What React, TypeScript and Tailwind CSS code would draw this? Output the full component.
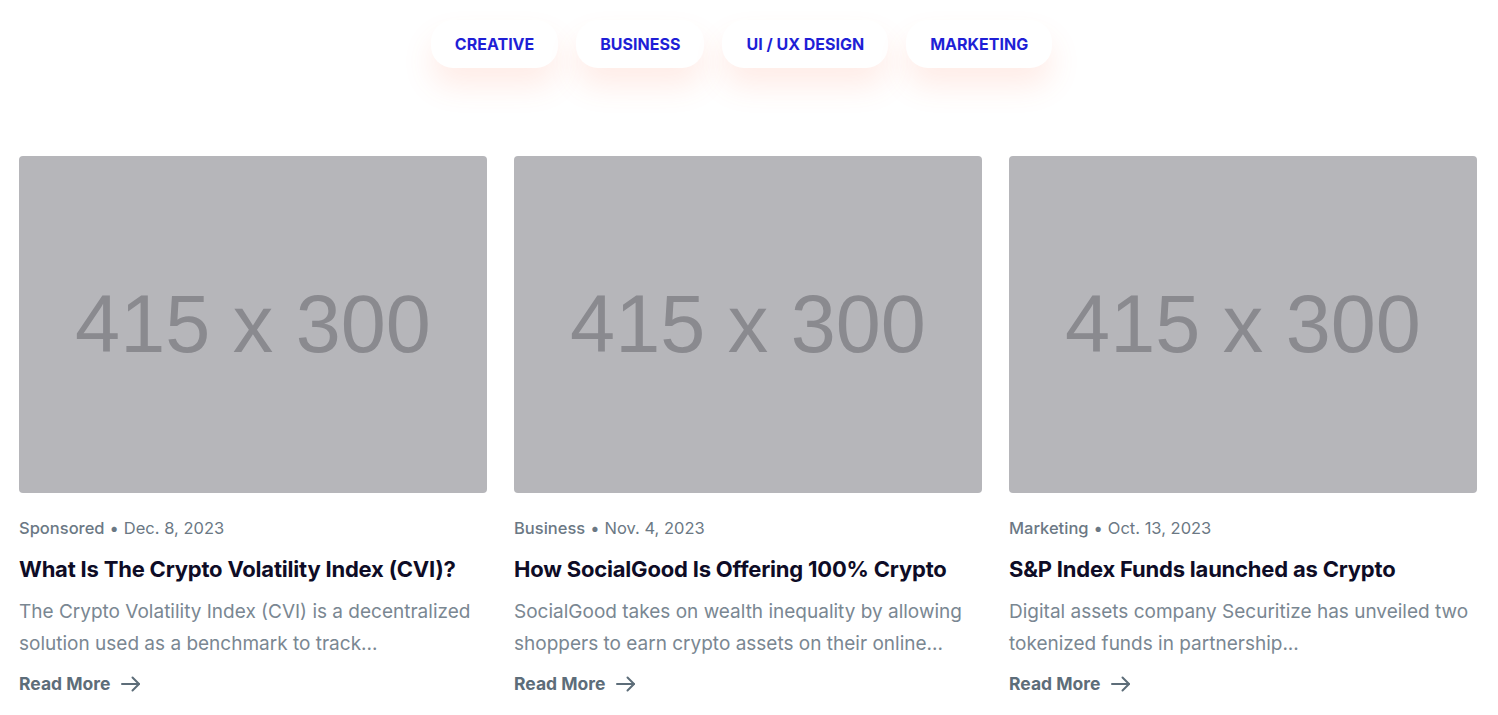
import React from "react";

const tabs = ["CREATIVE", "BUSINESS", "UI / UX DESIGN", "MARKETING"];

const posts = [
  {
    category: "Sponsored",
    date: "Dec. 8, 2023",
    title: "What Is The Crypto Volatility Index (CVI)?",
    excerpt: "The Crypto Volatility Index (CVI) is a decentralized solution used as a benchmark to track...",
  },
  {
    category: "Business",
    date: "Nov. 4, 2023",
    title: "How SocialGood Is Offering 100% Crypto",
    excerpt: "SocialGood takes on wealth inequality by allowing shoppers to earn crypto assets on their online...",
  },
  {
    category: "Marketing",
    date: "Oct. 13, 2023",
    title: "S&P Index Funds launched as Crypto",
    excerpt: "Digital assets company Securitize has unveiled two tokenized funds in partnership...",
  },
];

const Arrow = () => (
  <svg width="20" height="16" viewBox="0 0 20 16" fill="none" stroke="currentColor" strokeWidth="2" strokeLinecap="round" strokeLinejoin="round">
    <path d="M1 8h17" />
    <path d="M11.5 1.5L18 8l-6.5 6.5" />
  </svg>
);

// Kartu artikel blog
const PostCard = ({ post }: { post: (typeof posts)[number] }) => (
  <article className="flex flex-col">
    <div className="h-[337px] rounded-[4px] bg-[#b6b6ba] flex items-center justify-center">
      <span className="text-[81px] leading-none text-[#8a8a8f] font-['Liberation_Sans',Arial,sans-serif]">
        415 x 300
      </span>
    </div>
    <p className="mt-[23px] text-[16.5px] leading-6 text-[#6b7884]">
      <span className="font-medium">{post.category}</span>
      <span className="mx-[5px]">•</span>
      <span>{post.date}</span>
    </p>
    <h3 className="mt-[14px] text-[22px] leading-[30px] font-bold text-[#0e0c26] tracking-[-0.2px]">{post.title}</h3>
    <p className="mt-[12px] text-[19px] leading-[32px] text-[#7a8792]">{post.excerpt}</p>
    <a href="#" className="mt-[12px] flex items-center gap-[11px] text-[17.5px] leading-6 font-bold text-[#5d6d79]">
      Read More
      <Arrow />
    </a>
  </article>
);

export default function App() {
  return (
    <main className="min-h-screen bg-white font-['Inter','Noto_Sans',sans-serif]">
      {/* Tabs */}
      <div className="pt-5 flex justify-center gap-[18px] pr-[15px]">
        {tabs.map((t) => (
          <button
            key={t}
            className="h-[48px] px-[24px] rounded-[22px] bg-white text-[16px] font-bold text-[#1f1fd6] shadow-[0_18px_30px_rgba(255,110,70,0.13)]"
          >
            {t}
          </button>
        ))}
      </div>

      {/* Cards */}
      <div className="mt-[88px] pl-[19px] pr-[21px] grid grid-cols-3 gap-[27px]">
        {posts.map((p) => (
          <PostCard key={p.title} post={p} />
        ))}
      </div>
    </main>
  );
}
